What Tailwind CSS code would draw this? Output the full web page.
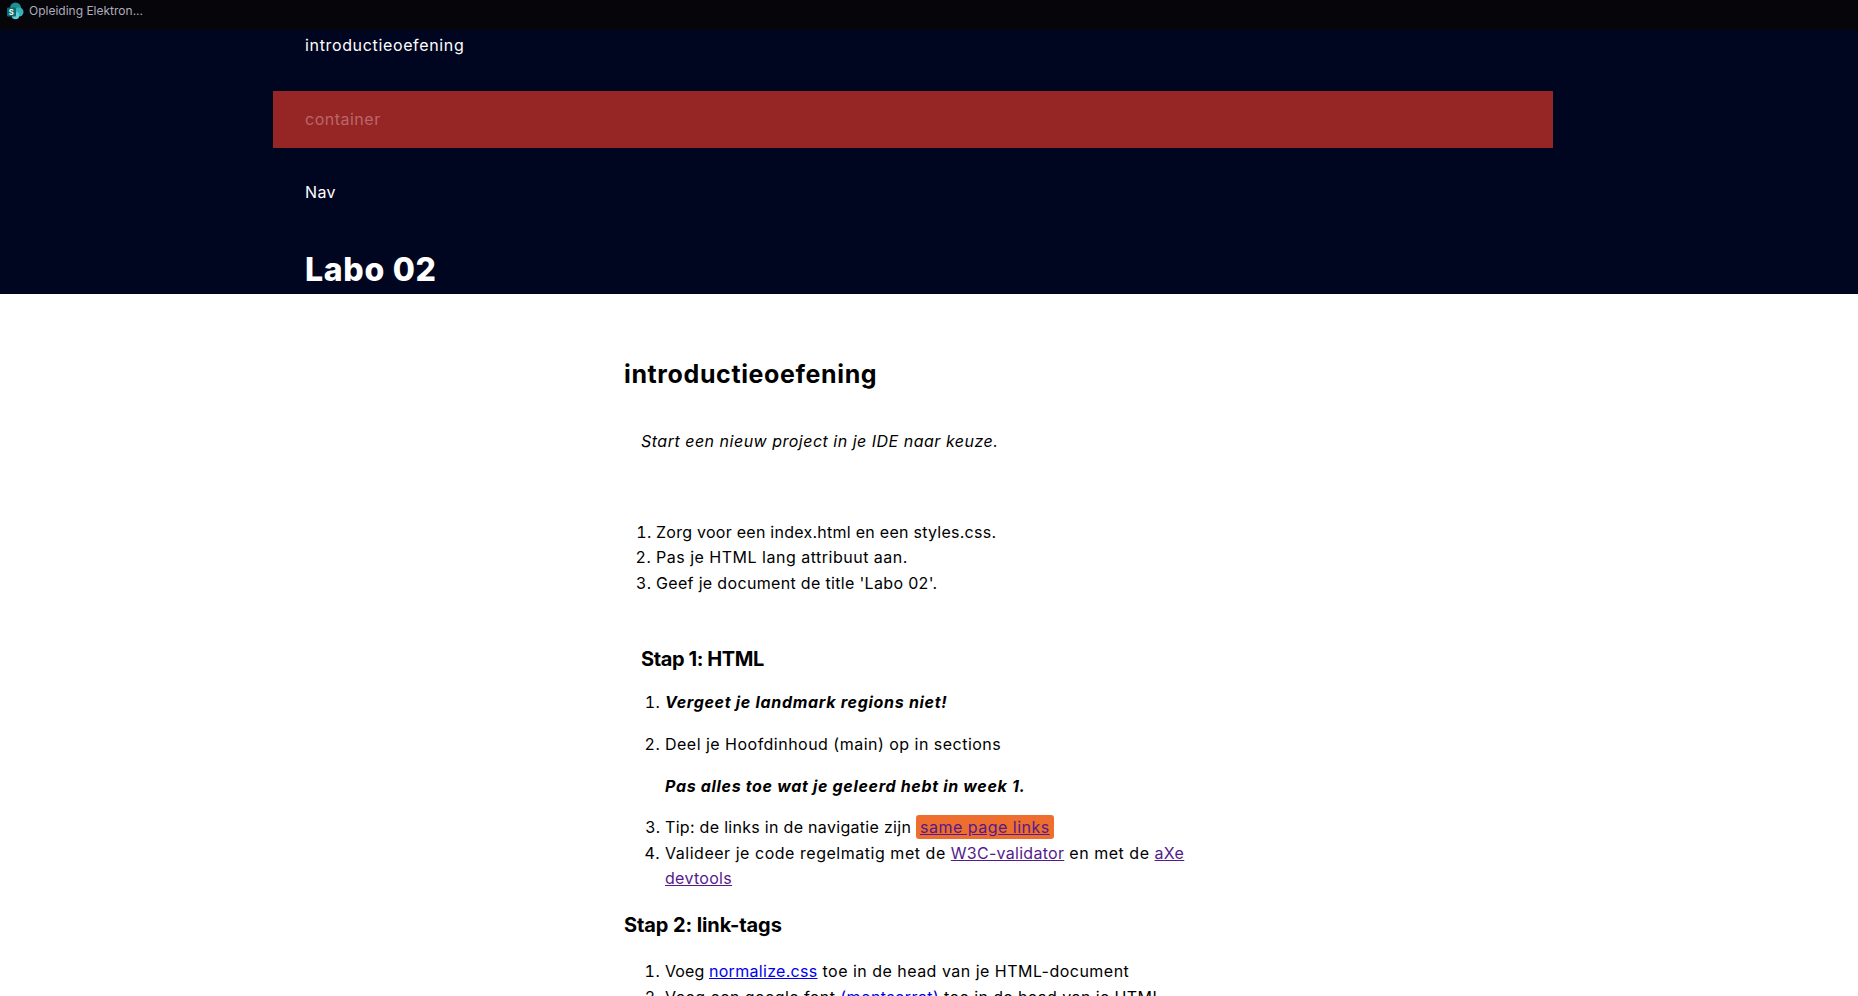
<!DOCTYPE html>
<html lang="nl">
<head>
<meta charset="utf-8">
<title>Labo 02</title>
<script src="https://cdn.jsdelivr.net/npm/@tailwindcss/browser@4"></script>
</head>
<body class="h-[996px] overflow-hidden bg-white font-['Inter',sans-serif] text-[16px] leading-[25.6px] tracking-[0.4px] text-black">
    <div class="flex h-[30px] items-start bg-[#060509] pt-[2px] pl-[6px]">
        <svg class="h-[18px] w-[18px]" viewBox="0 0 18 18">
            <circle cx="9.5" cy="6" r="5.5" fill="#1f8f96"/>
            <circle cx="13" cy="10" r="4.5" fill="#37b0b7"/>
            <circle cx="9.5" cy="13.5" r="3.8" fill="#5fd0d8"/>
            <rect x="1" y="5.5" width="9" height="9" rx="1" fill="#0a6b70"/>
            <text x="5.5" y="12.5" text-anchor="middle" font-size="7.5" font-weight="700" fill="#fff" font-family="Inter">S</text>
        </svg>
        <span class="ml-[5px] text-[12px] leading-[18px] tracking-normal text-[#aeacbd]">Opleiding Elektron...</span>
    </div>
    <header class="h-[264px] bg-[#000520] text-white">
        <div class="ml-[273px] w-[1280px]">
            <p class="pt-[3px] pl-[32px] tracking-[0.65px]">introductieoefening</p>
            <div class="mt-[32px] flex h-[57px] items-center bg-[#962525] pt-[2px] pl-[32px] tracking-[0.5px] text-[#b9686a]">container</div>
            <p class="mt-[32px] pl-[32px]">Nav</p>
            <h1 class="mt-[45px] pl-[32px] text-[32px] leading-[40px] font-extrabold tracking-[0.7px]">Labo 02</h1>
        </div>
    </header>
    <main class="ml-[624px] w-[580px]">
        <h2 class="pt-[62px] text-[25px] leading-[36px] font-bold tracking-[0.62px]">introductieoefening</h2>
        <section class="pl-[17px]">
            <p class="mt-[37px] tracking-[0.5px] italic">Start een nieuw project in je IDE naar keuze.</p>
            <ol class="mt-[65px] list-decimal pl-[15px]">
                <li class="tracking-[0.26px]">Zorg voor een index.html en een styles.css.</li>
                <li class="tracking-[0.5px]">Pas je HTML lang attribuut aan.</li>
                <li class="tracking-[0.33px]">Geef je document de title 'Labo 02'.</li>
            </ol>
            <h3 class="mt-[49px] text-[20px] leading-[28px] font-bold tracking-[-0.4px]">Stap 1: HTML</h3>
            <ol class="mt-[17px] list-decimal pl-[24px]">
                <li class="mb-[16px]"><strong class="font-bold tracking-[0.7px] italic">Vergeet je landmark regions niet!</strong></li>
                <li class="tracking-[0.48px]">
                    Deel je Hoofdinhoud (main) op in sections
                    <p class="my-[16px] font-bold tracking-[0.67px] italic">Pas alles toe wat je geleerd hebt in week 1.</p>
                </li>
                <li class="tracking-[0.3px]">Tip: de links in de navigatie zijn <a href="#same" class="rounded-[3px] bg-[#ed6e2f] px-[4px] py-[2px] tracking-[0.5px] text-[#551a8b] underline">same page links</a></li>
                <li class="tracking-[0.53px]">Valideer je code regelmatig met de <a href="#w3c" class="tracking-[0.28px] text-[#551a8b] underline">W3C-validator</a> en met de <a href="#axe" class="tracking-[0.3px] text-[#551a8b] underline">aXe devtools</a></li>
            </ol>
        </section>
        <h3 class="mt-[19px] text-[20px] leading-[28px] font-bold tracking-[-0.1px]">Stap 2: link-tags</h3>
        <ol class="mt-[20px] list-decimal pl-[41px]">
            <li class="tracking-[0.48px]"><span class="tracking-[0.1px]">Voeg </span><a href="#normalize" class="tracking-[0.3px] text-[#0000ee] underline">normalize.css</a> toe in de head van je HTML-document</li>
            <li>Voeg een google font <a href="#font" class="text-[#0000ee] underline">(montserrat)</a> toe in de head van je HTML</li>
        </ol>
    </main>
</body>
</html>
